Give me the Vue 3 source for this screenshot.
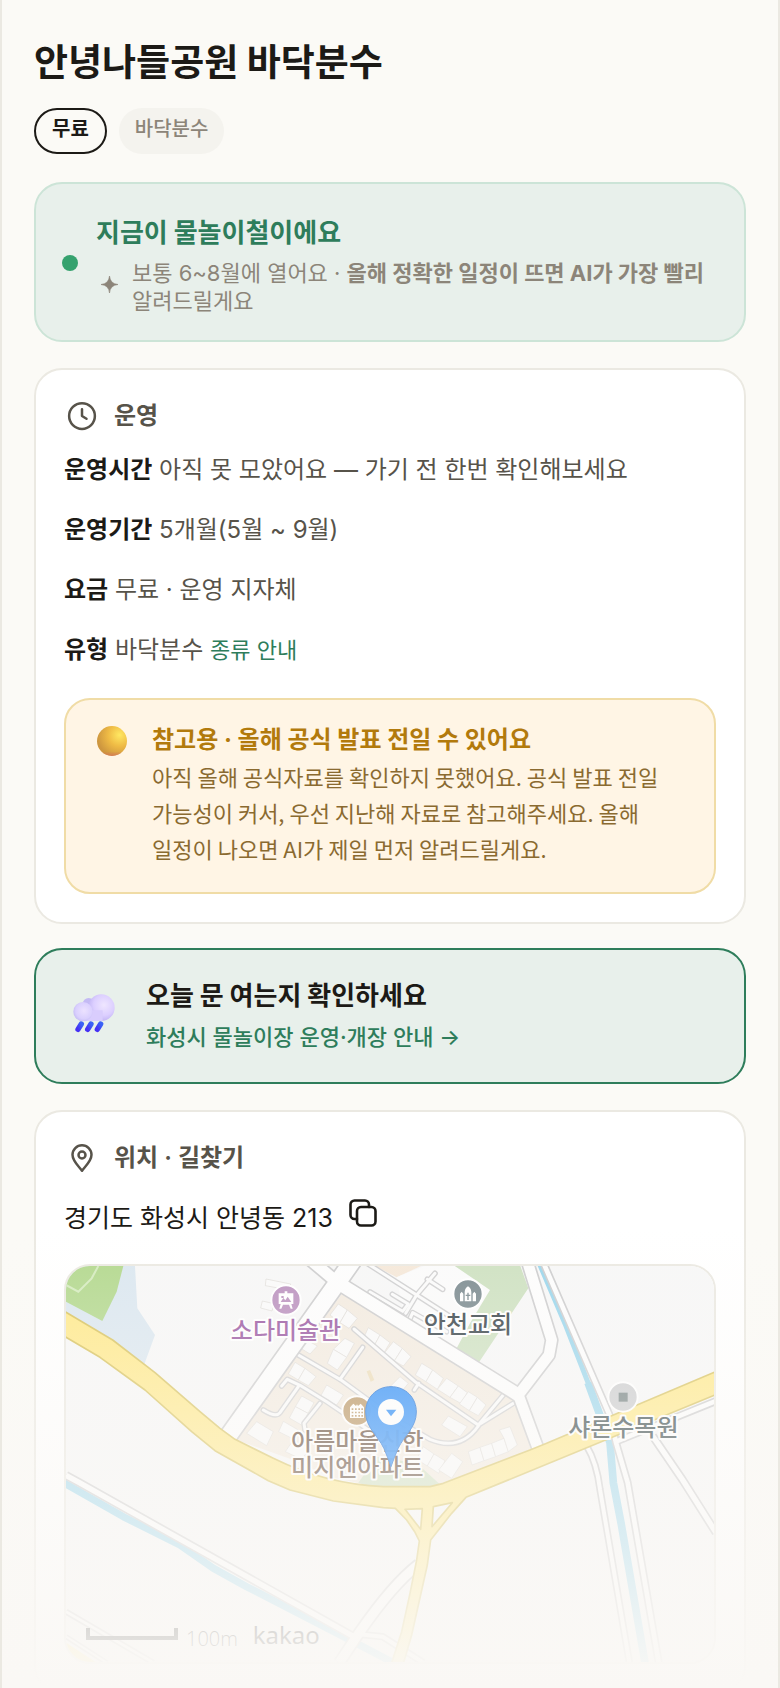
<script setup>
import { ref } from 'vue'

const address = '경기도 화성시 안녕동 213'
const copied = ref(false)

const rows = [
    { label: '운영시간', value: '아직 못 모았어요 — 가기 전 한번 확인해보세요' },
    { label: '운영기간', value: '5개월(5월 ~ 9월)' },
    { label: '요금', value: '무료 · 운영 지자체' },
    { label: '유형', value: '바닥분수', link: '종류 안내' }
]

// white streets, drawn twice: grey casing first, then the surface
const streets = [
    { d: 'M487 510 L807 60 L870 -30', w: 50 },
    { d: 'M720 -30 L812 48', w: 34 },
    { d: 'M812 48 L1357 387', w: 38 },
    { d: 'M1382 -20 L1457 222 L1449 267 L1357 387 L1417 550', w: 32 },
    { d: 'M1432 -10 L1632 450 L1650 530 L1685 650 L1780 1200', w: 14 },
    { d: 'M1562 540 Q1592 590 1602 670 L1692 1200', w: 12 },
    { d: 'M1650 527 L1950 405', w: 14 },
    { d: 'M1760 510 L1850 642 L1950 800', w: 16 },
    { d: 'M0 628 L40 650 L860 1110', w: 16 },
    { d: 'M0 1037 L262 1190', w: 8 },
    { d: 'M0 1112 L122 1190', w: 6 },
    { d: 'M1058 895 Q980 955 880 1100 L820 1190', w: 28 },
    { d: 'M880 1105 L950 1112 L1072 1190', w: 12 }
]

const lanes = [
    'M372 207 L555 365 L745 495 L820 405',
    'M745 495 L858 425',
    'M205 285 L330 358 L490 475 L600 538 Q690 575 745 498',
    'M330 358 L398 262',
    'M155 378 L172 358 L210 376 L290 425 L430 520',
    'M205 380 L150 458 Q138 474 100 450',
    'M270 430 L222 490 L225 510',
    'M566 370 L553 390',
    'M380 -10 L560 105 L700 195',
    'M527 160 L560 105 L615 40',
    'M592 58 L638 88',
    'M487 103 L535 132 L518 154 L420 96',
    'M570 215 L535 188 L548 158 L650 215'
]

const buildings = [
    '325,132 352,150 330,188 300,165', '352,150 382,175 357,205 330,188',
    '415,203 450,225 430,262 398,240', '450,225 480,248 460,281 430,262',
    '490,245 517,265 493,303 460,283', '517,265 543,290 520,318 493,303',
    '345,235 373,250 350,292 310,268', '310,268 350,292 322,330 292,310',
    '195,307 225,325 205,360 175,342', '225,325 258,350 235,377 205,360',
    '230,240 262,258 240,282 214,266',
    '575,310 608,330 588,365 556,345', '608,330 640,355 622,388 588,365',
    '650,355 685,378 660,412 622,388', '685,378 712,398 692,430 660,412',
    '715,395 742,412 718,452 688,432', '742,412 768,435 745,467 718,452',
    '655,468 712,500 690,530 635,495',
    '290,375 340,405 320,435 270,412', '510,350 535,370 510,400 480,380',
    '215,408 252,428 234,460 196,440', '196,440 234,460 216,496 178,474',
    '160,484 205,510 188,536 146,515',
    '80,485 130,515 110,557 50,520', '190,540 240,565 215,598 166,575',
    '580,560 612,582 592,618 560,598', '612,582 645,602 626,640 592,618',
    '665,580 698,605 665,655 626,630',
    '715,575 750,562 762,602 726,615', '750,562 785,550 797,590 762,602',
    '785,550 822,535 835,575 797,590', '808,510 840,500 862,555 835,575 822,535',
    '108,57 182,72 178,90 106,77', '97,123 132,131 126,153 92,144'
]

const mapLabels = [
    { x: 660, y: 220, text: '소다미술관', color: '#9b5aa3' },
    { x: 1206, y: 202, text: '안천교회', color: '#38444a' },
    { x: 874, y: 552, text: '아름마을신한', color: '#5f4634' },
    { x: 874, y: 630, text: '미지엔아파트', color: '#5f4634' },
    { x: 1672, y: 509, text: '샤론수목원', color: '#38484a' }
]

function copyAddress() {
    navigator.clipboard?.writeText(address)
    copied.value = true
}
</script>

<template>
    <main class="place">
        <h1 class="place-title">안녕나들공원 바닥분수</h1>

        <div class="chips">
            <span class="chip chip-free">무료</span>
            <span class="chip">바닥분수</span>
        </div>

        <section class="season">
            <span class="season-dot"></span>
            <div class="season-body">
                <h2 class="season-title">지금이 물놀이철이에요</h2>
                <div class="season-note">
                    <svg class="season-star" viewBox="0 0 16 16" aria-hidden="true">
                        <path d="M8 0 Q8.6 7.4 16 8 Q8.6 8.6 8 16 Q7.4 8.6 0 8 Q7.4 7.4 8 0Z" fill="currentColor"
                            stroke="currentColor" stroke-width="0.6" />
                    </svg>
                    <p>보통 6~8월에 열어요 · <b>올해 정확한 일정이 뜨면 AI가 가장 빨리</b> 알려드릴게요</p>
                </div>
            </div>
        </section>

        <section class="card">
            <h2 class="card-title">
                <span class="card-icon">
                    <svg width="30" height="30" viewBox="0 0 24 24" fill="none" stroke="currentColor" stroke-width="2"
                        stroke-linecap="round" stroke-linejoin="round" aria-hidden="true">
                        <circle cx="12" cy="12" r="10.3" />
                        <path d="M12 6.5 V12 L15.6 14.2" />
                    </svg>
                </span>
                운영
            </h2>
            <div class="rows">
                <p v-for="row in rows" :key="row.label" class="row">
                    <b>{{ row.label }}</b> {{ row.value }}
                    <a v-if="row.link" href="#" class="row-link">{{ row.link }}</a>
                </p>
            </div>

            <div class="notice">
                <span class="notice-icon">
                    <svg width="30" height="30" viewBox="0 0 30 30" aria-hidden="true">
                        <defs>
                            <radialGradient id="ball" cx="0.75" cy="0.3" r="0.75">
                                <stop offset="0" stop-color="#ffe862" />
                                <stop offset="0.5" stop-color="#efbb45" />
                                <stop offset="1" stop-color="#cd963f" />
                            </radialGradient>
                            <linearGradient id="ballShade" x1="0" y1="0" x2="0" y2="1">
                                <stop offset="0.85" stop-color="#d9765a" stop-opacity="0" />
                                <stop offset="1" stop-color="#d9765a" stop-opacity="0.8" />
                            </linearGradient>
                        </defs>
                        <circle cx="15" cy="15" r="15" fill="url(#ball)" />
                        <circle cx="15" cy="15" r="15" fill="url(#ballShade)" />
                    </svg>
                </span>
                <div>
                    <h3 class="notice-title">참고용 · 올해 공식 발표 전일 수 있어요</h3>
                    <p class="notice-text">
                        아직 올해 공식자료를 확인하지 못했어요. 공식 발표 전일 가능성이 커서, 우선 지난해 자료로 참고해주세요. 올해 일정이 나오면 AI가 제일 먼저 알려드릴게요.
                    </p>
                </div>
            </div>
        </section>

        <a href="#" class="cta">
            <span class="cta-icon">
                <svg width="44" height="44" viewBox="38 41 132 132" aria-hidden="true">
                    <defs>
                        <radialGradient id="puffBig" cx="0.6" cy="0.4" r="0.65">
                            <stop offset="0" stop-color="#efe6ff" />
                            <stop offset="0.6" stop-color="#dccfff" />
                            <stop offset="1" stop-color="#bdb0f2" />
                        </radialGradient>
                        <radialGradient id="puffSmall" cx="0.55" cy="0.45" r="0.6">
                            <stop offset="0" stop-color="#ece2ff" />
                            <stop offset="0.7" stop-color="#dad0fe" />
                            <stop offset="1" stop-color="#c3baf3" />
                        </radialGradient>
                        <linearGradient id="drop" x1="1" y1="0" x2="0" y2="1">
                            <stop offset="0" stop-color="#3a62f6" />
                            <stop offset="1" stop-color="#4630f4" />
                        </linearGradient>
                    </defs>
                    <circle cx="88" cy="71" r="18" fill="#c4baf4" />
                    <circle cx="126" cy="82" r="40" fill="url(#puffBig)" />
                    <path d="M70 90 H130 V122 H70Z" fill="#d9cdfd" />
                    <circle cx="71" cy="94" r="29" fill="url(#puffSmall)" />
                    <g stroke="url(#drop)" stroke-width="16" stroke-linecap="round">
                        <path d="M66 131 L56 147" />
                        <path d="M95 131 L85 147" />
                        <path d="M124 131 L114 147" />
                    </g>
                </svg>
            </span>
            <span class="cta-body">
                <strong class="cta-title">오늘 문 여는지 확인하세요</strong>
                <span class="cta-sub">화성시 물놀이장 운영·개장 안내 →</span>
            </span>
        </a>

        <section class="card">
            <h2 class="card-title">
                <span class="card-icon">
                    <svg width="30" height="30" viewBox="0 0 24 24" fill="none" stroke="currentColor" stroke-width="2"
                        stroke-linejoin="round" aria-hidden="true">
                        <path d="M12 22.2 C10.4 19.6 4.4 14.8 4.4 9.4 A7.6 7.6 0 0 1 19.6 9.4 C19.6 14.8 13.6 19.6 12 22.2Z" />
                        <circle cx="12" cy="9.6" r="2.8" />
                    </svg>
                </span>
                위치 · 길찾기
            </h2>
            <div class="address">
                <span>{{ address }}</span>
                <button type="button" class="copy" :aria-label="copied ? '복사됨' : '주소 복사'" @click="copyAddress">
                    <svg width="28" height="28" viewBox="0 0 28 28" fill="none" stroke="currentColor" stroke-width="2.6"
                        stroke-linecap="round" stroke-linejoin="round" aria-hidden="true">
                        <rect x="8" y="8" width="18.5" height="18.5" rx="4" />
                        <path d="M8 20 H5.5 A4 4 0 0 1 1.5 16 V5.5 A4 4 0 0 1 5.5 1.5 H16 A4 4 0 0 1 20 5.5 V8" />
                    </svg>
                </button>
            </div>

            <div class="map">
                <svg class="map-art" viewBox="0 0 1944 1188" preserveAspectRatio="xMidYMid slice" role="img"
                    aria-label="지도">
                    <rect width="1944" height="1188" fill="#f7f7f7" />
                    <path d="M0 0 H207 L214 127 L267 207 L235 295 L0 145Z" fill="#dbe7f0" />
                    <path d="M0 0 H172 L152 77 L109 165 L0 107Z" fill="#b3d88e" />
                    <path d="M0 57 L37 77 L77 37 L97 0" fill="none" stroke="#d5ebbf" stroke-width="6" />

                    <g transform="translate(492 -18)">
                        <path d="M340 95 L860 425 L905 568 L680 660 L600 685 L480 690 L300 650 L190 600 L20 540Z"
                            fill="#f3ebe0" />
                        <path d="M420 10 L590 10 L500 52Z" fill="#f5e8d9" />
                        <path d="M590 15 L670 15 L780 90 L680 265 L520 160 L500 52Z" fill="#fbfbfb" />
                        <path d="M670 15 H870 L895 85 L745 310 L680 265 L720 190 L780 90Z" fill="#cee1c1" />
                        <path d="M385 668 L440 590 L560 610 L632 675 L600 690 H450Z" fill="#cfe0c0" />
                        <path d="M410 334 L420 330 L433 360 L422 365Z" fill="#ecdcb8" />
                        <g fill="#fafafa" stroke="#dcd9d5" stroke-width="2">
                            <polygon v-for="b in buildings" :key="b" :points="b" />
                        </g>
                        <g fill="none" stroke-linejoin="round" stroke-linecap="round">
                            <path v-for="d in lanes" :key="d" :d="d" stroke="#cfcfd0" stroke-width="17" />
                            <path v-for="d in lanes" :key="d" :d="d" stroke="#fbfbfb" stroke-width="9" />
                        </g>
                    </g>

                    <g fill="none" stroke="#9bd6ec" stroke-linejoin="round">
                        <path d="M1418 -12 L1500 180 L1570 360" stroke-width="15" />
                        <path d="M1566 350 L1610 470 L1632 530 L1642 650 L1665 770 L1737 1190" stroke-width="23" />
                        <path d="M-10 648 L172 752 L342 837 L442 907 L542 962 L842 1117 L982 1190" stroke-width="22" />
                    </g>
                    <g fill="none" stroke-linejoin="round">
                        <path v-for="s in streets" :key="s.d" :d="s.d" stroke="#cdcdce" :stroke-width="s.w + 10" />
                        <path v-for="s in streets" :key="s.d" :d="s.d" stroke="#fdfdfd" :stroke-width="s.w" />
                    </g>

                    <g fill="#ffe98a" stroke="#d8c35e" stroke-width="5" stroke-linejoin="round">
                        <path
                            d="M-10 133 L140 222 L267 320 L402 437 L462 487 L507 520 L622 577 Q780 655 952 662 L1092 662 L1132 652 L1392 552 L1442 532 L1954 315 V384 L1200 694 L1157 742 L1094 822 L1084 897 L1037 1107 L1010 1200 H974 L1007 1097 L1032 982 L1052 882 L1060 825 L1046 797 L1022 762 L988 727 L952 725 L802 705 L672 672 L607 644 L447 554 L377 497 L237 372 L102 274 L-10 208Z" />
                        <path d="M1017 730 L1069 728 L1064 790Z" fill="#f7f7f7" />
                        <path d="M1102 722 L1159 710 L1098 782Z" fill="#f7f7f7" />
                        <path d="M0 1130 L92 1190 H20 L0 1160Z" stroke="none" />
                    </g>

                    <g stroke="#fff" stroke-width="6">
                        <circle cx="660" cy="102" r="44" fill="#bb92bf" />
                        <circle cx="1206" cy="84" r="44" fill="#7c8b90" />
                        <circle cx="873" cy="435" r="44" fill="#b8935f" />
                        <circle cx="1671" cy="393" r="44" fill="#cbccce" />
                    </g>
                    <g fill="#fff">
                        <path
                            d="M638 82 H656 V76 H664 V82 H682 V114 H676 L680 128 H674 L669 116 H651 L646 128 H640 L644 114 H638Z" />
                        <path d="M644 108 L652 96 L658 103 L665 92 L676 108Z M646 90 H653 V96 H646Z" fill="#bb92bf" />
                        <path
                            d="M1182 106 V83 L1187 77 L1192 83 V106Z M1196 106 V78 Q1197 66 1206 61 Q1215 66 1216 78 V106Z M1220 106 V83 L1225 77 L1230 83 V106Z" />
                        <path d="M1204 80 H1208 V86 H1213 V90 H1208 V102 H1204 V90 H1199 V86 H1204Z" fill="#7c8b90" />
                        <path
                            d="M852 456 V424 L862 413 L870 420 L873 415 L876 420 L884 413 L894 424 V456Z" />
                        <path
                            d="M857 427h5v5h-5z M867 427h5v5h-5z M877 427h5v5h-5z M886 427h5v5h-5z M857 437h5v5h-5z M867 437h5v5h-5z M877 437h5v5h-5z M886 437h5v5h-5z M857 447h5v5h-5z M867 447h5v5h-5z M877 447h5v5h-5z M886 447h5v5h-5z"
                            fill="#b8935f" />
                        <rect x="1658" y="380" width="27" height="27" fill="#738080" />
                    </g>

                    <g class="map-label">
                        <text v-for="l in mapLabels" :key="l.text" :x="l.x" :y="l.y" :fill="l.color">{{ l.text }}</text>
                    </g>

                    <g transform="translate(492 -18)">
                        <path
                            d="M483 380 C438 380 407 414 407 456 C407 503 443 525 462 566 Q474 594 483 620 Q492 594 504 566 C523 525 559 503 559 456 C559 414 528 380 483 380Z"
                            fill="#2188f9" fill-opacity="0.95" stroke="#1c6fd6" stroke-width="3" />
                        <circle cx="483" cy="456" r="39" fill="#fff" />
                        <path d="M468 449 H499 L483 469Z" fill="#2188f9" />
                    </g>

                    <path d="M66 1086 V1116 H330 V1086" fill="none" stroke="#111" stroke-width="12" />
                    <text class="map-scale" x="360" y="1139">100m</text>
                    <text class="map-brand" x="560" y="1133">kakao</text>
                </svg>
            </div>
        </section>

        <div class="fade"></div>
    </main>
</template>

<style>
body {
    margin: 0;
    background: #fbfaf6;
}
</style>

<style scoped>
.place {
    position: relative;
    box-sizing: border-box;
    height: 100vh;
    overflow: hidden;
    padding: 40px 32px 0;
    border-left: 2px solid #ebe9e2;
    border-right: 2px solid #ebe9e2;
    background: #fbfaf6;
    color: #1c1a16;
    font-family: Inter, "Noto Sans CJK KR", sans-serif;
    word-break: keep-all;
}

h1,
h2,
h3,
p {
    margin: 0;
}

.place-title {
    font-family: "Noto Sans CJK KR", sans-serif;
    font-size: 37px;
    line-height: 40px;
    font-weight: 700;
}

.chips {
    display: flex;
    gap: 12px;
    margin: 28px 0;
}

.chip {
    box-sizing: border-box;
    height: 46px;
    padding: 0 16px;
    border-radius: 23px;
    background: #f4f3ee;
    color: #8c8579;
    font-size: 20px;
    line-height: 42px;
    font-weight: 500;
}

.chip-free {
    border: 2px solid #1c1a16;
    background: transparent;
    color: #1c1a16;
    line-height: 38px;
    font-weight: 600;
}

.season {
    display: flex;
    align-items: center;
    gap: 18px;
    padding: 27px 26px 25px;
    border: 2px solid #cce4d7;
    border-radius: 28px;
    background: #e8f0eb;
}

.season-dot {
    flex-shrink: 0;
    width: 16px;
    height: 16px;
    border-radius: 50%;
    background: #35a26e;
}

.season-title {
    font-family: "Noto Sans CJK KR", sans-serif;
    font-size: 26px;
    line-height: 40px;
    font-weight: 700;
    color: #2e7d5b;
}

.season-note {
    display: flex;
    align-items: center;
    gap: 14px;
    margin-top: 8px;
    padding-left: 5px;
    font-size: 22px;
    line-height: 28px;
    color: #8c8579;
}

.season-star {
    flex-shrink: 0;
    width: 17px;
    height: 17px;
    margin-bottom: 6px;
}

.card {
    margin-top: 26px;
    padding: 28px;
    border: 2px solid #ebe9e2;
    border-radius: 28px;
    background: #fff;
}

.card-title {
    display: flex;
    align-items: center;
    gap: 14px;
    font-size: 24px;
    line-height: 36px;
    font-weight: 600;
    color: #57534a;
}

.card-icon {
    display: flex;
    justify-content: center;
    width: 36px;
}

.rows {
    display: flex;
    flex-direction: column;
    gap: 20px;
    margin-top: 16px;
}

.row {
    font-size: 24px;
    line-height: 40px;
    color: #57534a;
}

.row b {
    font-weight: 700;
    color: #1c1a16;
}

.row-link {
    font-size: 22px;
    color: #2e7d5b;
    text-decoration: none;
}

.notice {
    display: flex;
    gap: 22px;
    margin-top: 28px;
    padding: 24px 28px 26px;
    border: 2px solid #f0dca6;
    border-radius: 26px;
    background: #fff5e5;
}

.notice-icon {
    display: flex;
    flex-shrink: 0;
    justify-content: center;
    width: 36px;
    padding-top: 2px;
}

.notice-title {
    font-size: 24px;
    line-height: 32px;
    font-weight: 700;
    color: #b27a0c;
}

.notice-text {
    margin-top: 2px;
    font-family: "Noto Sans CJK KR", sans-serif;
    font-size: 22px;
    line-height: 36px;
    color: #8a6a30;
}

.cta {
    display: flex;
    align-items: center;
    gap: 22px;
    margin-top: 24px;
    padding: 28px;
    border: 2px solid #2e7d5b;
    border-radius: 28px;
    background: #e8f0eb;
    color: #1c1a16;
    text-decoration: none;
}

.cta-icon {
    display: flex;
    flex-shrink: 0;
    justify-content: center;
    width: 60px;
}

.cta-body {
    display: flex;
    flex-direction: column;
    gap: 10px;
}

.cta-title {
    font-family: "Noto Sans CJK KR", sans-serif;
    font-size: 26px;
    line-height: 32px;
    font-weight: 700;
}

.cta-sub {
    font-size: 22px;
    line-height: 34px;
    font-weight: 500;
    color: #2e7d5b;
}

.address {
    display: flex;
    align-items: center;
    gap: 16px;
    margin-top: 22px;
    font-size: 25px;
    line-height: 40px;
}

.copy {
    display: flex;
    padding: 0 0 10px;
    border: 0;
    background: none;
    color: inherit;
    cursor: pointer;
}

.map {
    margin-top: 26px;
    overflow: hidden;
    border: 2px solid #ebe9e2;
    border-radius: 26px;
}

.map-art {
    display: block;
    width: 100%;
}

.map-label {
    font-family: "Noto Sans CJK KR", sans-serif;
    font-size: 72px;
    font-weight: 500;
    text-anchor: middle;
    stroke: #fff;
    stroke-width: 12px;
    stroke-linejoin: round;
    paint-order: stroke;
}

.map-scale {
    font-family: "Open Sans", sans-serif;
    font-size: 60px;
    font-weight: 300;
    fill: #222;
}

.map-brand {
    font-family: "Noto Sans", sans-serif;
    font-size: 72px;
    font-weight: 400;
    fill: #111;
}

.fade {
    position: absolute;
    right: 0;
    bottom: 0;
    left: 0;
    height: 460px;
    background: linear-gradient(rgba(250, 248, 245, 0), #faf8f5);
    pointer-events: none;
}
</style>
